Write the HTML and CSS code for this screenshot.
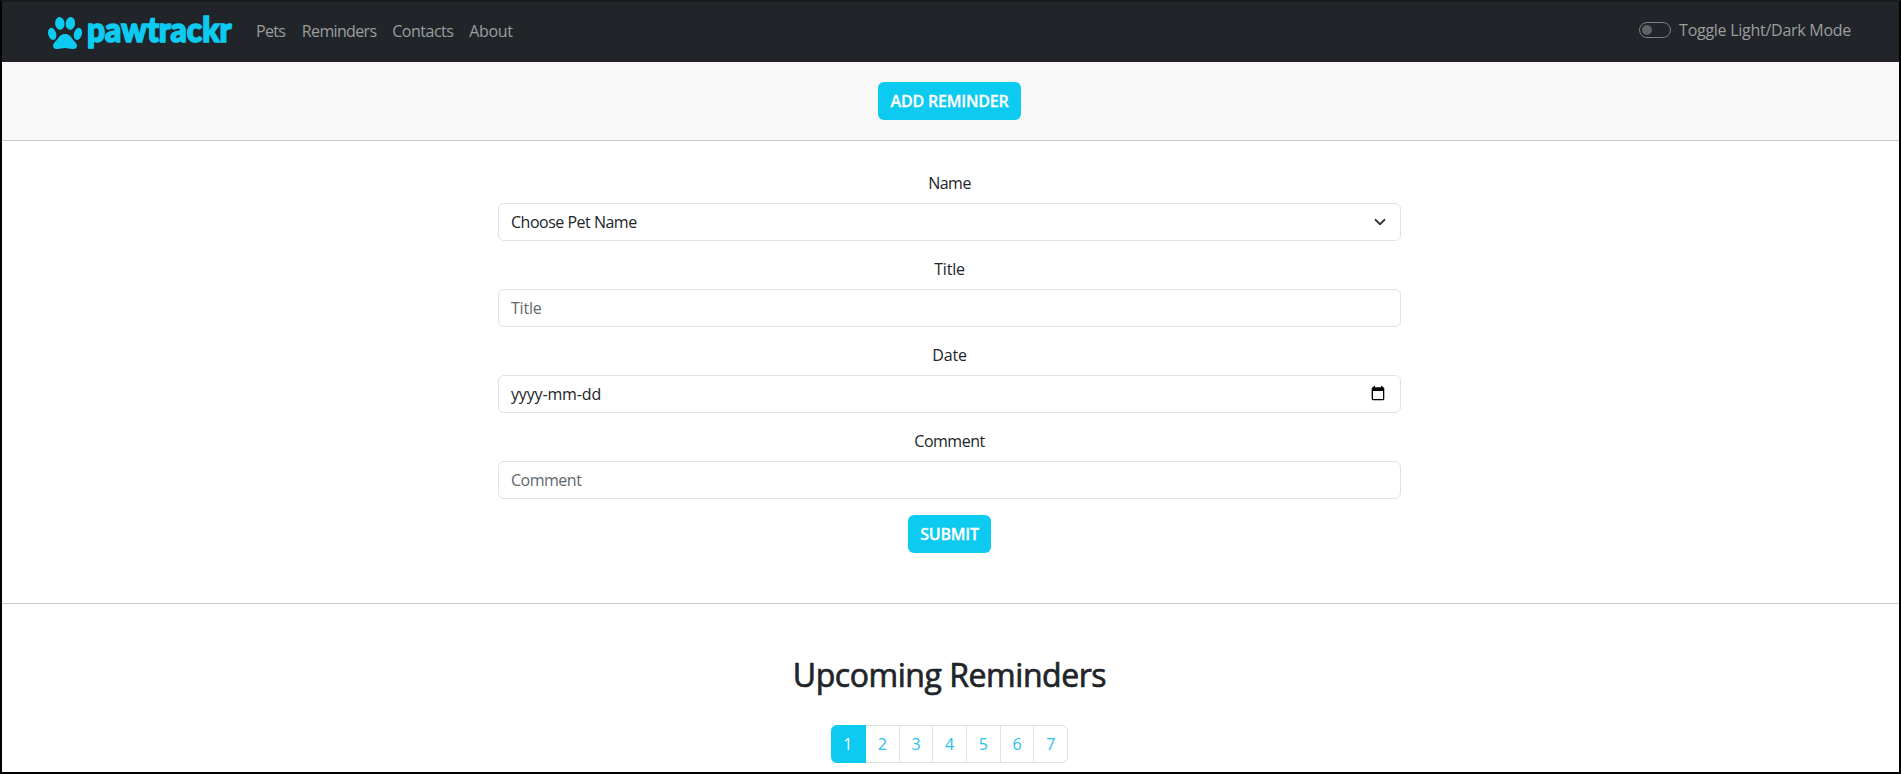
FILE: index.html
```
<!DOCTYPE html>
<html lang="en">
<head>
<meta charset="utf-8">
<title>Pawtrackr</title>
<link rel="stylesheet" href="styles.css">
</head>
<body>
<header class="navbar">
  <a class="brand" href="#" aria-label="pawtrackr">
    <svg width="188" height="50" viewBox="0 -6 188 50">
      <g class="brand-mark">
        <ellipse cx="13.8" cy="12.4" rx="4.7" ry="6.5" transform="rotate(-6 13.8 12.4)"/>
        <ellipse cx="24.4" cy="12.4" rx="4.7" ry="6.5" transform="rotate(6 24.4 12.4)"/>
        <ellipse cx="6.2" cy="22.9" rx="4" ry="6.2" transform="rotate(-16 6.2 22.9)"/>
        <ellipse cx="31.9" cy="22.9" rx="4" ry="6.2" transform="rotate(16 31.9 22.9)"/>
        <path d="M19 23c4 0 6 2.700 7.800 5.400 1.600 2.200 4.200 3.600 4.200 6.400 0 2.700-2.200 3.400-4.600 3.200-2.600-.2-4.700-1.100-7.400-1.100s-4.800.9-7.400 1.100c-2.400.2-4.600-.5-4.600-3.200 0-2.800 2.600-4.200 4.200-6.400C13 25.700 15 23 19 23z"/>
      </g>
      <text class="brand-text" x="41" y="30.500" textLength="144.500" lengthAdjust="spacingAndGlyphs">pawtrackr</text>
    </svg>
  </a>
  <nav class="links">
    <a class="l-pets" href="#">Pets</a>
    <a class="l-rem" href="#">Reminders</a>
    <a class="l-con" href="#">Contacts</a>
    <a class="l-about" href="#">About</a>
  </nav>
  <label class="mode"><span class="switch"></span><span class="mode-text">Toggle Light/Dark Mode</span></label>
</header>
<section class="toolbar">
  <button class="btn btn-add" type="button">ADD REMINDER</button>
</section>
<form class="form">
  <div class="field">
    <span class="label">Name</span>
    <div class="control"><span class="choose">Choose Pet Name</span>
      <svg class="chevron" width="16" height="12" viewBox="0 0 16 16"><path d="m2 5 6 6 6-6" fill="none" stroke="#343a40" stroke-width="2.400" stroke-linecap="round" stroke-linejoin="round"/></svg>
    </div>
  </div>
  <div class="field">
    <span class="label title">Title</span>
    <div class="control muted"><span class="title">Title</span></div>
  </div>
  <div class="field">
    <span class="label title">Date</span>
    <div class="control"><span class="date">yyyy-mm-dd</span>
      <svg class="calendar" width="14" height="15" viewBox="0 0 14 15"><path fill-rule="evenodd" d="M2.500 0h1.500v1.300h6V0h1.500v1.300H12a1.300 1.300 0 0 1 1.300 1.300v10.400a1.300 1.300 0 0 1-1.300 1.300H2a1.300 1.300 0 0 1-1.300-1.300V2.600A1.300 1.300 0 0 1 2 1.300h.5zM2 5v8h10V5z"/></svg>
    </div>
  </div>
  <div class="field">
    <span class="label">Comment</span>
    <div class="control muted"><span>Comment</span></div>
  </div>
  <button class="btn btn-submit" type="button">SUBMIT</button>
</form>
<main class="upcoming">
  <h2>Upcoming Reminders</h2>
  <nav class="pages">
    <a class="page active" href="#">1</a><a class="page" href="#">2</a><a class="page" href="#">3</a><a class="page" href="#">4</a><a class="page" href="#">5</a><a class="page" href="#">6</a><a class="page" href="#">7</a>
  </nav>
</main>
</body>
</html>
```
FILE: styles.css
```
* { box-sizing: border-box; }
html { height: 100%; overflow: hidden; }
body {
  margin: 0;
  height: 774px;
  overflow: hidden;
  border: 2px solid #000;
  border-top-color: #1a1a1a;
  background: #fff;
  color: #212529;
  font: 16px/24px "Open Sans", "Noto Sans", sans-serif;
}
a { color: inherit; text-decoration: none; }

.navbar {
  display: flex;
  align-items: center;
  height: 60px;
  padding: 0 48px 2px 44px;
  background: #212529;
  border-bottom: 1px solid #251d2b;
  color: #9b9d9e;
}
.brand { display: flex; width: 188px; height: 50px; margin-bottom: 2px; }
.brand svg { overflow: visible; }
.brand-mark { fill: #0dcaf0; }
.brand-text {
  font: 900 35px Lato, sans-serif;
  fill: #0dcaf0;
  stroke: #0dcaf0;
  stroke-width: 1.700px;
}
.links { display: flex; gap: 16.500px; margin-left: 22px; padding-top: 1px; }
.l-pets, .l-rem { letter-spacing: -0.65px; }
.l-con { letter-spacing: -0.5px; }
.l-about { letter-spacing: -0.3px; }
.l-con, .l-about { margin-left: -0.7px; }
.mode { display: flex; align-items: center; gap: 8px; margin-left: auto; margin-bottom: 1px; }
.mode-text { letter-spacing: -0.27px; }
.switch {
  width: 32px;
  height: 16px;
  padding: 2px;
  border: 1px solid #7c7f81;
  border-radius: 8px;
}
.switch::before {
  content: "";
  display: block;
  width: 10px;
  height: 10px;
  border-radius: 50%;
  background: #5f6366;
}

.toolbar {
  display: flex;
  justify-content: center;
  align-items: center;
  height: 79px;
  padding-right: 2px;
  background: #f8f8f8;
  border-bottom: 1px solid #c8c9ca;
}
.btn {
  height: 38px;
  padding: 0;
  border: 0;
  border-radius: 6px;
  background: #0dcaf0;
  color: #fff;
  font: 600 16px/24px "Open Sans", "Noto Sans", sans-serif;
  letter-spacing: -0.2px;
  -webkit-text-stroke: 0.3px #fff;
}
.btn-add { width: 143px; }
.btn-submit { width: 83px; }

.form {
  display: flex;
  flex-direction: column;
  align-items: center;
  gap: 16px;
  height: 463px;
  padding: 30px 2px 0 0;
  border-bottom: 1px solid #c8c9ca;
}
.field { display: flex; flex-direction: column; gap: 8px; width: 903px; letter-spacing: -0.5px; }
.label { text-align: center; }
.title { letter-spacing: -0.2px; }
.date { letter-spacing: -0.15px; }
.control {
  display: flex;
  align-items: center;
  justify-content: space-between;
  height: 38px;
  padding: 0 12px;
  border: 1px solid #dee2e6;
  border-radius: 6px;
}
.muted { color: #63686c; }
.calendar { margin: 0 3px 2px 0; }

.upcoming { display: flex; flex-direction: column; align-items: center; padding: 52px 2px 0 0; }
h2 {
  margin: 0 0 31px;
  font-size: 32px;
  line-height: 38px;
  font-weight: 500;
  letter-spacing: -0.45px;
  -webkit-text-stroke: 0.7px #212529;
}
.pages { display: flex; }
.page {
  width: 33.700px;
  height: 38px;
  border: 1px solid #dee2e6;
  border-left-width: 0;
  line-height: 36px;
  text-align: center;
  color: #29c0ea;
}
.page:last-child { border-radius: 0 6px 6px 0; }
.active {
  width: 35px;
  background: #0dcaf0;
  border-color: #0dcaf0;
  border-radius: 6px 0 0 6px;
  color: #fff;
}
```
